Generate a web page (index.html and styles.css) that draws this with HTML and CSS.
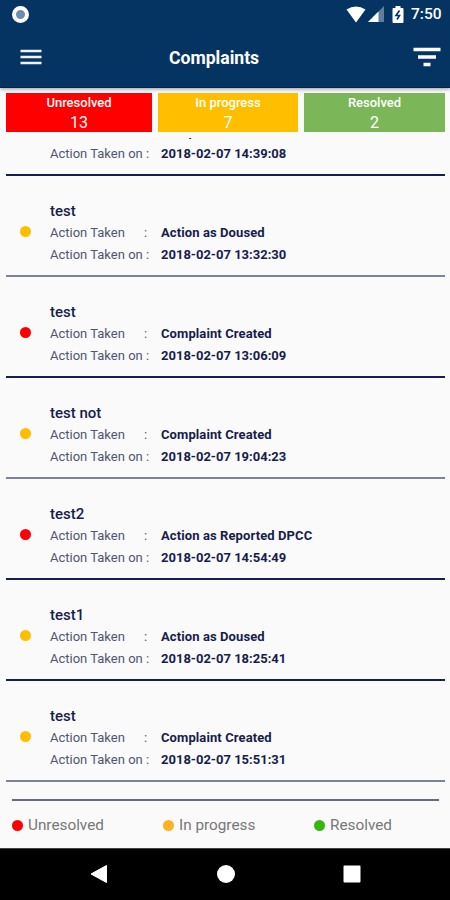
FILE: index.html
```html
<!DOCTYPE html>
<html lang="en">
<head>
    <meta charset="UTF-8">
    <meta name="viewport" content="width=device-width, initial-scale=1.0">
    <title>Complaints</title>
    <link rel="stylesheet" href="styles.css">
</head>
<body>
    <header class="header">
        <div class="status-bar">
            <span class="status-dot"></span>
            <div class="status-icons">
                <svg class="wifi" width="20" height="17" viewBox="0 0 20 17"><path d="M0.5 3.6Q10 -2.6 19.5 3.6L10 16.5z" fill="#fff"/></svg>
                <svg class="signal" width="16" height="16" viewBox="0 0 16 16"><path d="M0 16L16 0V16z" fill="#5f7e9d"/><path d="M0 16L10.5 5.5V16z" fill="#fff"/></svg>
                <svg class="battery" width="12" height="17" viewBox="0 0 12 17"><path d="M3.5 0h5v2H10.5q1 0 1 1V16q0 1-1 1H1.5q-1 0-1-1V3q0-1 1-1h2z" fill="#fff"/><path d="M7.5 4.5L4 9.5H7.5L5 13.5" fill="none" stroke="#053463" stroke-width="1.6"/></svg>
                <span class="clock">7:50</span>
            </div>
        </div>
        <div class="toolbar">
            <svg class="menu" width="22" height="16" viewBox="0 0 22 16"><path d="M0.5 2h21M0.5 8h21M0.5 14h21" stroke="#f0f2fa" stroke-width="2.6"/></svg>
            <h1>Complaints</h1>
            <svg class="filter" width="28" height="20" viewBox="0 0 28 20"><path d="M0.5 2.5h27M5 10h18M10.5 17.5h7" stroke="#fff" stroke-width="3.6"/></svg>
        </div>
    </header>
    <div class="tabs">
        <div class="tab red"><span class="tab-name">Unresolved</span><span class="tab-count">13</span></div>
        <div class="tab yellow"><span class="tab-name">In progress</span><span class="tab-count">7</span></div>
        <div class="tab green"><span class="tab-name">Resolved</span><span class="tab-count">2</span></div>
    </div>
    <main class="list">
        <div class="row">
            <span class="dot red"></span>
            <div class="info">
                <h2>test</h2>
                <p><span class="label">Action Taken</span><span class="colon">:</span><b>Complaint Created</b></p>
                <p><span class="label">Action Taken on</span><span class="colon">:</span><b class="date">2018-02-07 14:39:08</b></p>
            </div>
        </div>
        <div class="row light">
            <span class="dot yellow"></span>
            <div class="info">
                <h2>test</h2>
                <p><span class="label">Action Taken</span><span class="colon">:</span><b>Action as Doused</b></p>
                <p><span class="label">Action Taken on</span><span class="colon">:</span><b class="date">2018-02-07 13:32:30</b></p>
            </div>
        </div>
        <div class="row">
            <span class="dot red"></span>
            <div class="info">
                <h2>test</h2>
                <p><span class="label">Action Taken</span><span class="colon">:</span><b>Complaint Created</b></p>
                <p><span class="label">Action Taken on</span><span class="colon">:</span><b class="date">2018-02-07 13:06:09</b></p>
            </div>
        </div>
        <div class="row light">
            <span class="dot yellow"></span>
            <div class="info">
                <h2>test not</h2>
                <p><span class="label">Action Taken</span><span class="colon">:</span><b>Complaint Created</b></p>
                <p><span class="label">Action Taken on</span><span class="colon">:</span><b class="date">2018-02-07 19:04:23</b></p>
            </div>
        </div>
        <div class="row">
            <span class="dot red"></span>
            <div class="info">
                <h2>test2</h2>
                <p><span class="label">Action Taken</span><span class="colon">:</span><b>Action as Reported DPCC</b></p>
                <p><span class="label">Action Taken on</span><span class="colon">:</span><b class="date">2018-02-07 14:54:49</b></p>
            </div>
        </div>
        <div class="row">
            <span class="dot yellow"></span>
            <div class="info">
                <h2>test1</h2>
                <p><span class="label">Action Taken</span><span class="colon">:</span><b>Action as Doused</b></p>
                <p><span class="label">Action Taken on</span><span class="colon">:</span><b class="date">2018-02-07 18:25:41</b></p>
            </div>
        </div>
        <div class="row light">
            <span class="dot yellow"></span>
            <div class="info">
                <h2>test</h2>
                <p><span class="label">Action Taken</span><span class="colon">:</span><b>Complaint Created</b></p>
                <p><span class="label">Action Taken on</span><span class="colon">:</span><b class="date">2018-02-07 15:51:31</b></p>
            </div>
        </div>
    </main>
    <footer class="legend">
        <div class="legend-item"><span class="dot red"></span>Unresolved</div>
        <div class="legend-item"><span class="dot orange"></span>In progress</div>
        <div class="legend-item"><span class="dot lime"></span>Resolved</div>
    </footer>
    <nav class="nav-bar">
        <svg width="18" height="18" viewBox="0 0 18 18"><path d="M1 9L16.5 0.5V17.5z" fill="#fff" stroke="#fff" stroke-linejoin="round"/></svg>
        <svg width="18" height="18" viewBox="0 0 18 18"><circle cx="9" cy="9" r="9" fill="#fff"/></svg>
        <svg width="18" height="18" viewBox="0 0 18 18"><rect x="0.5" y="0.5" width="17" height="17" rx="1" fill="#fff"/></svg>
    </nav>
</body>
</html>
```
FILE: styles.css
```css
* {
    box-sizing: border-box;
}
body {
    margin: 0;
    height: 900px;
    display: flex;
    flex-direction: column;
    overflow: hidden;
    font-family: Roboto, sans-serif;
    background-color: #fafafa;
}
h1, h2, p {
    margin: 0;
}
svg {
    display: block;
}
.header {
    height: 88px;
    flex-shrink: 0;
    background-color: #053463;
    border-bottom: 1px solid #05244c;
    box-shadow: 0 1px 4px rgba(0, 0, 0, 0.4);
    color: white;
}
.status-bar {
    height: 28px;
    display: flex;
    justify-content: space-between;
    align-items: center;
    padding: 0 8px 0 12px;
}
.status-dot {
    width: 17px;
    height: 17px;
    border: 4px solid white;
    border-radius: 50%;
    background-color: #6d8baa;
}
.status-icons {
    display: flex;
    align-items: center;
}
.signal {
    margin-left: 2px;
}
.battery {
    margin-left: 8px;
}
.clock {
    width: 31px;
    margin-left: 7px;
    font-size: 15.5px;
    font-weight: 500;
}
.toolbar {
    height: 58px;
    display: flex;
    align-items: center;
    padding: 0 9px 0 20px;
}
.toolbar h1 {
    flex: 1;
    margin-left: 127px;
    padding-top: 2px;
    font-size: 17.6px;
    font-weight: 700;
}
.tabs {
    height: 50px;
    flex-shrink: 0;
    display: grid;
    grid-template-columns: 146px 140px 141px;
    gap: 6px;
    padding: 5px 5px 6px 6px;
}
.tab {
    height: 39px;
    display: flex;
    flex-direction: column;
    align-items: center;
    color: #fff;
}
.tab-name {
    font-size: 13px;
    font-weight: 500;
    line-height: 20px;
}
.tab-count {
    font-size: 16px;
    line-height: 19px;
}
.red {
    background-color: #ff0000;
}
.yellow {
    background-color: #ffbf00;
}
.green {
    background-color: #7bb658;
}
.orange {
    background-color: #ffb11f;
}
.lime {
    background-color: #35b70d;
}
.list {
    height: 644px;
    flex-shrink: 0;
    display: flex;
    flex-direction: column;
    justify-content: flex-end;
    overflow: hidden;
    padding: 0 5px 0 6px;
}
.row {
    height: 101px;
    flex-shrink: 0;
    display: flex;
    padding-top: 24px;
    border-bottom: 2px solid #141d54;
}
.row.light {
    border-bottom-color: #7c8499;
}
.dot {
    width: 11px;
    height: 11px;
    border-radius: 50%;
}
.row .dot {
    margin: 26px 19.5px 0 13.5px;
}
.info h2 {
    font-size: 15px;
    font-weight: 500;
    line-height: 22px;
    color: #181c4c;
}
.info p {
    display: flex;
    font-size: 13px;
    line-height: 22px;
    color: #50566f;
}
.label {
    width: 94px;
}
.colon {
    width: 17px;
}
.info p:last-child .colon {
    padding-left: 2px;
}
.info b {
    font-weight: 700;
    letter-spacing: 0.1px;
    color: #181c4c;
}
.info .date {
    letter-spacing: 0;
}
.legend {
    height: 49px;
    flex-shrink: 0;
    display: flex;
    margin: 17px 11px 0 12px;
    border-top: 2px solid #636b87;
    font-size: 15.3px;
    color: #777;
}
.legend-item {
    width: 151px;
    height: 48px;
    flex-shrink: 0;
    display: flex;
    align-items: center;
    gap: 5px;
}
.legend-item:last-child {
    width: auto;
}
.nav-bar {
    flex: 1;
    display: flex;
    justify-content: space-between;
    align-items: center;
    padding: 0 89px 1px 90px;
    border-top: 1px solid #444;
    background-color: #000;
}
```
